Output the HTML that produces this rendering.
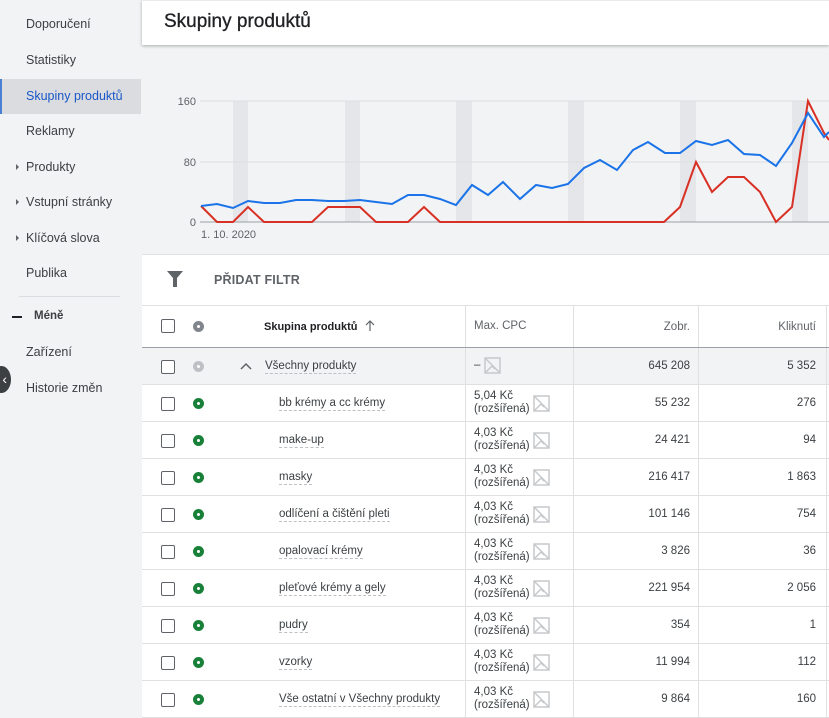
<!DOCTYPE html>
<html><head><meta charset="utf-8"><style>
*{margin:0;padding:0;box-sizing:border-box}
body{width:829px;height:711px;overflow:hidden;background:#f1f3f4;font-family:"Liberation Sans",Arial,sans-serif;position:relative;color:#3c4043}
.a{position:absolute}
.nav{position:absolute;left:26px;font-size:12.5px;color:#3c4043}
.tri{position:absolute;left:16px;width:0;height:0;border-top:3px solid transparent;border-bottom:3px solid transparent;border-left:3px solid #5f6368}
.row{position:absolute;left:142px;width:687px;height:37px;border-bottom:1px solid #e0e0e0;background:#fff;font-size:11.5px;color:#3c4043}
.cb{position:absolute;left:19px;width:14px;height:14px;border:1.5px solid #5f6368;border-radius:2px;top:12px;background:#fff}
.dot{position:absolute;left:51px;top:13px;width:11px;height:11px;border-radius:50%;background:#188038}
.dot:after{content:"";position:absolute;left:4px;top:4px;width:3px;height:3px;border-radius:50%;background:#fff}
.nm{position:absolute;left:137px;top:12px;border-bottom:1px dashed #bdc1c6;padding-bottom:1px}
.cpc{position:absolute;left:332px;top:5px;line-height:13px;font-size:11.5px}
.ic{position:absolute;left:391px;top:10px}
.v1{position:absolute;right:139px;top:12px}
.v2{position:absolute;right:13px;top:12px}
.vl{position:absolute;top:0;bottom:0;width:1px;background:#e0e0e0}
</style></head><body>
<div class="nav" style="top:17px">Doporučení</div>
<div class="nav" style="top:53px">Statistiky</div>
<div class="a" style="left:0;top:79px;width:141px;height:35px;background:#dadce0;border-left:2px solid #4a7fd6"></div>
<div class="nav" style="top:89px;color:#1a57c8">Skupiny produktů</div>
<div class="nav" style="top:124px">Reklamy</div>
<div class="tri" style="top:164px"></div><div class="nav" style="top:160px">Produkty</div>
<div class="tri" style="top:199px"></div><div class="nav" style="top:195px">Vstupní stránky</div>
<div class="tri" style="top:235px"></div><div class="nav" style="top:231px">Klíčová slova</div>
<div class="nav" style="top:266px">Publika</div>
<div class="a" style="left:19px;top:296px;width:101px;height:1px;background:#dadce0"></div>
<div class="a" style="left:12px;top:316px;width:10px;height:2px;background:#202124"></div>
<div class="nav" style="top:310px;left:34px;font-size:11.5px;font-weight:bold;color:#3c4043">Méně</div>
<div class="nav" style="top:345px">Zařízení</div>
<div class="nav" style="top:381px">Historie změn</div>
<div class="a" style="left:-8px;top:366px;width:19px;height:27px;border-radius:50%;background:#3c4043;color:#fff;font-size:14px;line-height:27px;text-align:right;padding-right:4px">‹</div>
<div class="a" style="left:142px;top:0;width:687px;height:45px;background:#fff;box-shadow:0 1px 3px rgba(0,0,0,.3);border-top:1px solid #e8eaed"></div>
<div class="a" style="left:164px;top:11px;font-size:19px;color:#202124;-webkit-text-stroke:0.3px #202124">Skupiny produktů</div>
<svg class="a" style="left:142px;top:46px" width="687" height="208" viewBox="142 46 687 208">
<g fill="#e4e6e9"><rect x="233" y="101" width="15" height="121"/><rect x="345" y="101" width="15" height="121"/><rect x="456" y="101" width="16" height="121"/><rect x="568" y="101" width="16" height="121"/><rect x="680" y="101" width="16" height="121"/><rect x="792" y="101" width="16" height="121"/></g>
<line x1="200" y1="101" x2="829" y2="101" stroke="#dcdde0"/>
<line x1="200" y1="162" x2="829" y2="162" stroke="#dcdde0"/>
<line x1="200" y1="222" x2="829" y2="222" stroke="#9aa0a6"/>
<g font-size="11" fill="#5f6368" font-family="Liberation Sans,sans-serif" text-anchor="end"><text x="196" y="105">160</text><text x="196" y="166">80</text><text x="196" y="226">0</text></g>
<text x="201" y="238" font-size="11" fill="#5f6368" font-family="Liberation Sans,sans-serif">1. 10. 2020</text>
<polyline fill="none" stroke="#d93025" stroke-width="2" points="201,206 217,222 233,222 248,207 264,222 280,222 296,222 312,222 328,207 344,207 360,207 376,222 392,222 408,222 424,207 440,222 664,222 680,207 696,162 712,192 728,177 744,177 760,192 776,222 792,207 808,101 824,133 829,140"/>
<polyline fill="none" stroke="#1a73e8" stroke-width="2" points="201,206 217,204 233,208 248,201 264,203 280,203 296,200 312,200 328,201 344,201 360,200 376,202 392,204 408,195 424,195 440,199 456,205 472,185 488,195 503,182 520,199 536,185 552,188 568,184 584,168 600,160 617,170 633,150 648,142 665,153 680,153 696,141 712,145 728,140 744,154 760,155 776,166 792,143 808,113 824,137 829,132"/>
</svg>
<div class="a" style="left:142px;top:254px;width:687px;height:52px;background:#fff;border-top:1px solid #e0e0e0;border-bottom:1px solid #e0e0e0"></div>
<svg class="a" style="left:167px;top:271px" width="16" height="16" viewBox="0 0 16 16"><path d="M0 0H16L10 7V16H6V7Z" fill="#5f6368"/></svg>
<div class="a" style="left:214px;top:273px;font-size:12.5px;color:#5f6368;font-weight:bold;letter-spacing:.2px">PŘIDAT FILTR</div>
<div class="row" style="top:306px;height:42px;border-bottom:1px solid #9aa0a6">
<div class="cb" style="top:13px"></div><div class="dot" style="top:15px;background:#80868b"></div>
<div class="a" style="left:122px;top:14px;font-weight:bold;color:#202124;font-size:11px;white-space:nowrap">Skupina produktů<svg style="margin-left:6px;vertical-align:-2px" width="12" height="12" viewBox="0 0 12 12" fill="none" stroke="#5f6368" stroke-width="1.2"><path d="M6 11V1M2 5L6 1L10 5"/></svg></div>
<div class="vl" style="left:323px"></div><div class="vl" style="left:431px"></div><div class="vl" style="left:556px"></div><div class="vl" style="left:684px"></div>
<div class="a" style="left:332px;top:14px;color:#5f6368">Max. CPC</div>
<div class="v1" style="top:15px;color:#5f6368">Zobr.</div>
<div class="v2" style="top:15px;color:#5f6368">Kliknutí</div>
</div>
<div class="row" style="top:348px;height:37px;background:#f1f3f4">
<div class="cb"></div><div class="dot" style="background:#bdc1c6"></div>
<svg class="a" style="left:98px;top:14px" width="12" height="8" viewBox="0 0 12 8" fill="none" stroke="#5f6368" stroke-width="1.5"><path d="M1 7L6 2L11 7"/></svg>
<div class="nm" style="left:123px">Všechny produkty</div>
<div class="vl" style="left:323px"></div><div class="vl" style="left:431px"></div><div class="vl" style="left:556px"></div><div class="vl" style="left:684px"></div>
<div class="a" style="left:332px;top:11px">–</div>
<svg class="a" style="left:342px;top:9px" width="17" height="17" viewBox="0 0 17 17" fill="none" stroke="#c6c9cc" stroke-width="1.5"><rect x="1" y="1" width="15" height="15"/><path d="M1 1L16 16M1 16L8 9L11 12"/></svg>
<div class="v1">645 208</div><div class="v2">5 352</div>
</div>
<div id="rows"></div>
<script>
var d=[["bb krémy a cc krémy","5,04","55 232","276"],["make-up","4,03","24 421","94"],["masky","4,03","216 417","1 863"],["odlíčení a čištění pleti","4,03","101 146","754"],["opalovací krémy","4,03","3 826","36"],["pleťové krémy a gely","4,03","221 954","2 056"],["pudry","4,03","354","1"],["vzorky","4,03","11 994","112"],["Vše ostatní v Všechny produkty","4,03","9 864","160"]];
var h="";d.forEach(function(r,i){h+='<div class="row" style="top:'+(385+37*i)+'px"><div class="cb"></div><div class="dot"></div><div class="nm">'+r[0]+'</div><div class="vl" style="left:323px"></div><div class="vl" style="left:431px"></div><div class="vl" style="left:556px"></div><div class="vl" style="left:684px"></div><div class="cpc">'+r[1]+' Kč<br>(rozšířená)</div><svg class="ic" width="17" height="17" viewBox="0 0 17 17" fill="none" stroke="#c6c9cc" stroke-width="1.5"><rect x="1" y="1" width="15" height="15"/><path d="M1 1L16 16M1 16L8 9L11 12"/></svg><div class="v1">'+r[2]+'</div><div class="v2">'+r[3]+'</div></div>'});
document.getElementById("rows").innerHTML=h;
</script>
</body></html>
